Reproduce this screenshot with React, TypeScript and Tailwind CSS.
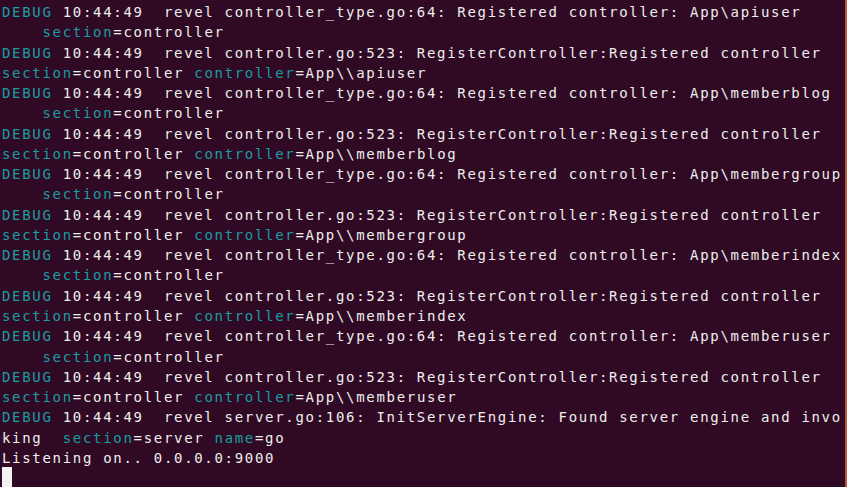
import React from 'react'

type Seg = { t: string; c?: boolean }

const debug = (rest: string): Seg[] => [{ t: 'DEBUG', c: true }, { t: ' 10:44:49  revel ' + rest }]
const sectionWrap: Seg[] = [{ t: '    ' }, { t: 'section', c: true }, { t: '=controller' }]
const ctrl = (name: string): Seg[] => [
  { t: 'section', c: true },
  { t: '=controller ' },
  { t: 'controller', c: true },
  { t: '=App\\\\' + name },
]

const names = ['apiuser', 'memberblog', 'membergroup', 'memberindex', 'memberuser']

const lines: Seg[][] = []
names.forEach((n) => {
  lines.push(debug('controller_type.go:64: Registered controller: App\\' + n))
  lines.push(sectionWrap)
  lines.push(debug('controller.go:523: RegisterController:Registered controller'))
  lines.push(ctrl(n))
})
lines.push(debug('server.go:106: InitServerEngine: Found server engine and invo'))
lines.push([{ t: 'king  ' }, { t: 'section', c: true }, { t: '=server ' }, { t: 'name', c: true }, { t: '=go' }])
lines.push([{ t: 'Listening on.. 0.0.0.0:9000' }])

const Line = ({ segs }: { segs: Seg[] }) => (
  <div className="whitespace-pre h-[20.27px]">
    {segs.map((s, i) => (
      <span key={i} className={s.c ? 'text-[#1a9ca3]' : 'text-[#eeeeec]'}>
        {s.t}
      </span>
    ))}
  </div>
)

export default function App() {
  return (
    <div className="w-[847px] h-[487px] overflow-hidden bg-[#300a24] border-r-2 border-[#b9573a]">
      <div
        className="pl-[2px] pt-[2px] text-[14px] leading-[20.27px] tracking-[1.69px]"
        style={{ fontFamily: '"DejaVu Sans Mono", "Liberation Mono", monospace' }}
      >
        {lines.map((l, i) => (
          <Line key={i} segs={l} />
        ))}
        <div className="h-[20.27px] flex">
          <div className="w-[10px] h-full bg-[#f2f2f2] mt-[-1px]" />
        </div>
      </div>
    </div>
  )
}
